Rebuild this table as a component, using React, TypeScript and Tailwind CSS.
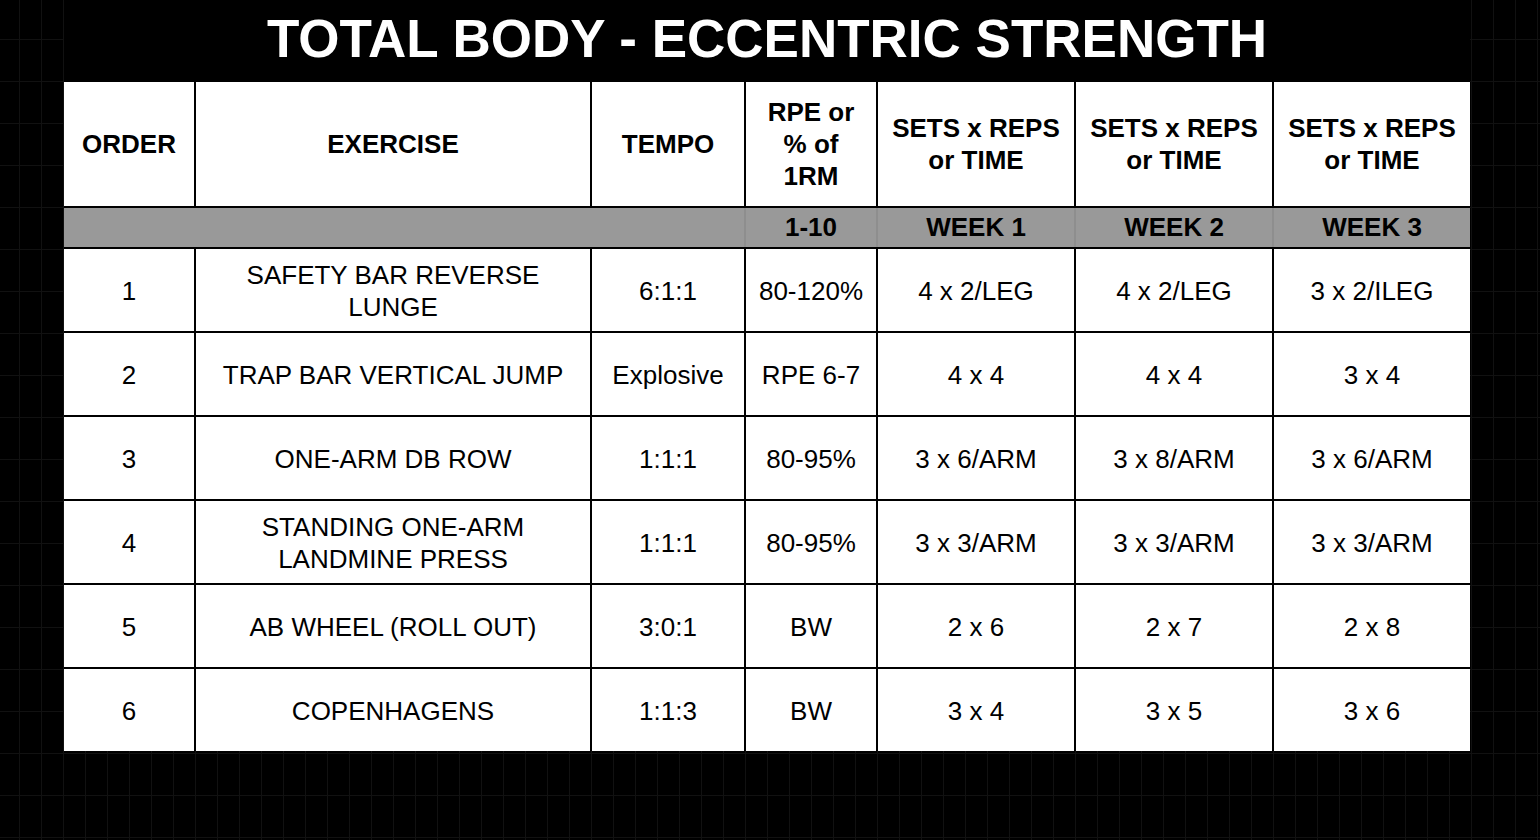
const columns = ["w-[130px]", "w-[394px]", "w-[152px]", "w-[130px]", "w-[196px]", "w-[196px]", "w-[196px]"];

type Row = {
	order: string;
	exercise: string[];
	tempo: string;
	rpe: string;
	week1: string;
	week2: string;
	week3: string;
};

const rows: Row[] = [
	{ order: "1", exercise: ["SAFETY BAR REVERSE", "LUNGE"], tempo: "6:1:1", rpe: "80-120%", week1: "4 x 2/LEG", week2: "4 x 2/LEG", week3: "3 x 2/ILEG" },
	{ order: "2", exercise: ["TRAP BAR VERTICAL JUMP"], tempo: "Explosive", rpe: "RPE 6-7", week1: "4 x 4", week2: "4 x 4", week3: "3 x 4" },
	{ order: "3", exercise: ["ONE-ARM DB ROW"], tempo: "1:1:1", rpe: "80-95%", week1: "3 x 6/ARM", week2: "3 x 8/ARM", week3: "3 x 6/ARM" },
	{ order: "4", exercise: ["STANDING ONE-ARM", "LANDMINE PRESS"], tempo: "1:1:1", rpe: "80-95%", week1: "3 x 3/ARM", week2: "3 x 3/ARM", week3: "3 x 3/ARM" },
	{ order: "5", exercise: ["AB WHEEL (ROLL OUT)"], tempo: "3:0:1", rpe: "BW", week1: "2 x 6", week2: "2 x 7", week3: "2 x 8" },
	{ order: "6", exercise: ["COPENHAGENS"], tempo: "1:1:3", rpe: "BW", week1: "3 x 4", week2: "3 x 5", week3: "3 x 6" },
];

const headers: string[][] = [
	["ORDER"],
	["EXERCISE"],
	["TEMPO"],
	["RPE or", "% of", "1RM"],
	["SETS x REPS", "or TIME"],
	["SETS x REPS", "or TIME"],
	["SETS x REPS", "or TIME"],
];

function Lines({ lines }: { lines: string[] }) {
	return (
		<>
			{lines.map((line, i) => (
				<span key={i} className="block whitespace-nowrap">
					{line}
				</span>
			))}
		</>
	);
}

export default function App() {
	return (
		<div
			className="min-h-[840px] w-full bg-black bg-[linear-gradient(to_right,#111111_1px,transparent_1px),linear-gradient(to_bottom,#111111_1px,transparent_1px)] [background-size:22px_42px] [background-position:19px_39px] font-['Liberation_Sans',Arial,sans-serif] text-black"
		>
			<div className="ml-[64px] w-[1406px]">
				{/* title sits on a plain black band that hides the sheet grid */}
				<h1 className="h-[82px] bg-black pt-[13px] text-center text-[53px] leading-[52px] font-bold text-white whitespace-nowrap">
					TOTAL BODY - ECCENTRIC STRENGTH
				</h1>

				<div className="flex flex-col gap-[2px] bg-black">
					<div className="flex h-[124px] gap-[2px]">
						{headers.map((lines, i) => (
							<div
								key={i}
								className={`${columns[i]} flex flex-col items-center justify-center bg-white text-center text-[26px] leading-[32px] font-bold`}
							>
								<Lines lines={lines} />
							</div>
						))}
					</div>

					<div className="flex h-[39px] gap-[2px] bg-[#8e8e8e]">
						<div className="w-[680px] bg-[#999999]"></div>
						<div className="flex w-[130px] items-center justify-center bg-[#999999] text-[26px] font-bold">1-10</div>
						<div className="flex w-[196px] items-center justify-center bg-[#999999] text-[26px] font-bold">WEEK 1</div>
						<div className="flex w-[196px] items-center justify-center bg-[#999999] text-[26px] font-bold">WEEK 2</div>
						<div className="flex w-[196px] items-center justify-center bg-[#999999] text-[26px] font-bold">WEEK 3</div>
					</div>

					{rows.map((row) => {
						const cells = [[row.order], row.exercise, [row.tempo], [row.rpe], [row.week1], [row.week2], [row.week3]];
						return (
							<div key={row.order} className="flex h-[82px] gap-[2px]">
								{cells.map((lines, i) => (
									<div
										key={i}
										className={`${columns[i]} flex flex-col items-center justify-center bg-white pt-[2px] text-center text-[26px] leading-[32px]`}
									>
										<Lines lines={lines} />
									</div>
								))}
							</div>
						);
					})}
				</div>
			</div>
		</div>
	);
}
